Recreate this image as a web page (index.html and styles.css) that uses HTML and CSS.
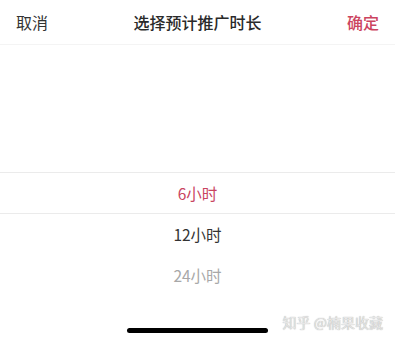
FILE: index.html
```html
<!DOCTYPE html>
<html lang="zh-CN">
<head>
  <meta charset="UTF-8">
  <title>选择预计推广时长</title>
  <link rel="stylesheet" href="styles.css">
</head>
<body>
  <div class="sheet">
    <div class="header">
      <span class="cancel">取消</span>
      <span class="title">选择预计推广时长</span>
      <span class="ok">确定</span>
    </div>

    <div class="picker">
      <div class="option blank"></div>
      <div class="option blank"></div>
      <div class="option blank"></div>
      <div class="option selected">6小时</div>
      <div class="option">12小时</div>
      <div class="option faded">24小时</div>
    </div>

    <div class="footer">
      <div class="home-bar"></div>
      <span class="watermark">知乎 @楠果收藏</span>
    </div>
  </div>
</body>
</html>
```

FILE: styles.css
```css
html, body { margin: 0; padding: 0; background: #fff; }
body { font-family: "Noto Sans CJK SC", "Noto Sans", sans-serif; }
.sheet { width: 395px; height: 342px; overflow: hidden; position: relative; }
.header {
  display: flex; align-items: center; justify-content: space-between;
  height: 44px; padding: 0 16px 0 16px;
  border-bottom: 1px solid #f4f4f4;
  font-size: 16px;
}
.cancel { color: #333; }
.title { color: #2a2a2a; font-weight: 500; }
.ok { color: #cc4460; font-weight: 500; }
.picker { padding-top: 4px; }
.option {
  height: 41px; line-height: 41px; text-align: center;
  font-size: 15.5px; color: #333;
}
.option.selected {
  color: #c9445f;
  border-top: 1px solid #ebebeb; border-bottom: 1px solid #ebebeb;
  height: 40px; line-height: 40px;
}
.option.faded { color: #a8a8a8; }
.footer { position: absolute; left: 0; right: 0; bottom: 0; height: 30px; }
.home-bar {
  position: absolute; left: 127px; top: 16px;
  width: 141px; height: 5px; border-radius: 3px; background: #000;
}
.watermark {
  position: absolute; right: 12px; top: 0px;
  font-size: 14px; color: #e6e6e6;
  text-shadow: 0 0 1px #999;
}
```
